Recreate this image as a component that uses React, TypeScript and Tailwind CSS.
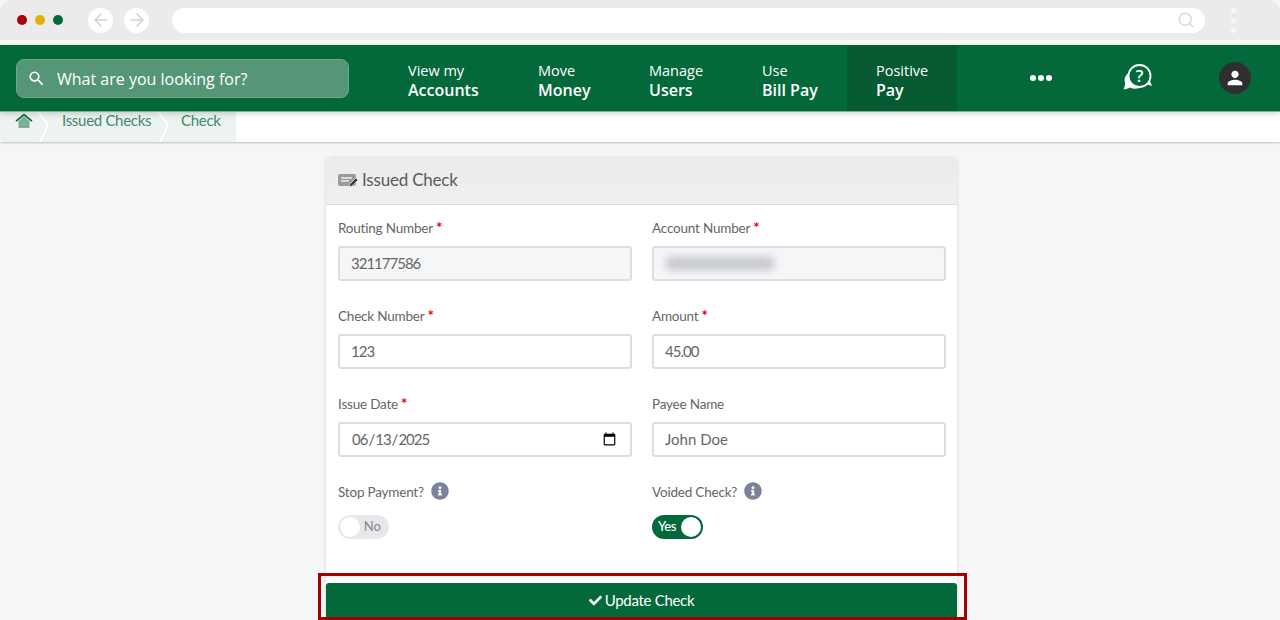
import { ArrowLeft, ArrowRight, Search } from "lucide-react";
import { FaCheck, FaInfoCircle } from "react-icons/fa";
import { MdPerson, MdSearch } from "react-icons/md";

const bodyFont = "font-['Lato','Open_Sans',sans-serif]";
const navFont = "font-['Open_Sans',sans-serif]";

export default function App() {
  return (
    <div className={`relative h-[620px] w-[1280px] overflow-hidden bg-[#f5f6f8] ${bodyFont}`}>
      <BrowserBar />
      <div className="h-[5px] bg-[#f9f9f9]" />
      <NavBar />
      <Breadcrumb />
      <main className="mt-4 ml-[326px] w-[631px]">
        <IssuedCheckCard />
      </main>
      {/* red highlight round the button */}
      <div className="absolute left-[318px] top-[573px] h-[47px] w-[649px] border-[3px] border-[#a50000]" />
    </div>
  );
}

function BrowserBar() {
  return (
    <div className="flex h-10 items-center rounded-t-xl bg-[#ebebeb]">
      <div className="ml-[17px] flex gap-2">
        <span className="h-[10px] w-[10px] rounded-full bg-[#a80007]" />
        <span className="h-[10px] w-[10px] rounded-full bg-[#e0b000]" />
        <span className="h-[10px] w-[10px] rounded-full bg-[#04693a]" />
      </div>
      <div className="ml-[25px] flex gap-[11px]">
        <span className="flex h-[25px] w-[25px] items-center justify-center rounded-full bg-white text-[#d4d4d4]">
          <ArrowLeft size={20} />
        </span>
        <span className="flex h-[25px] w-[25px] items-center justify-center rounded-full bg-white text-[#d4d4d4]">
          <ArrowRight size={20} />
        </span>
      </div>
      <div className="ml-[23px] flex h-[25px] w-[1033px] items-center justify-end rounded-full bg-white pr-[10px] text-[#d8d8d8]">
        <Search size={18} />
      </div>
      <div className="ml-[26px] flex flex-col gap-[5px]">
        <span className="h-[5px] w-[5px] rounded-full bg-[#f8f8f8]" />
        <span className="h-[5px] w-[5px] rounded-full bg-[#f8f8f8]" />
        <span className="h-[5px] w-[5px] rounded-full bg-[#f8f8f8]" />
      </div>
    </div>
  );
}

function NavBar() {
  return (
    <header className={`relative z-10 flex h-[67px] items-stretch border-b border-[#7fae97] bg-[#04693a] text-white shadow-[0_2px_6px_rgba(0,0,0,0.16)] ${navFont}`}>
      <div className="ml-4 mr-[59px] flex h-[39px] w-[333px] items-center self-center rounded-lg border border-[#6fa68c] bg-[#549675]">
        <MdSearch className="ml-[10px] text-[19px]" />
        <span className="ml-[11px] pt-[1px] text-[16px]">What are you looking for?</span>
      </div>
      <NavItem top="View my" bottom="Accounts" width="w-[130px]" />
      <NavItem top="Move" bottom="Money" width="w-[111px]" />
      <NavItem top="Manage" bottom="Users" width="w-[113px]" />
      <NavItem top="Use" bottom="Bill Pay" width="w-[85px]" />
      <div className="flex w-[110px] flex-col justify-center bg-[#055a31] pt-[4px] pl-[29px]">
        <div className="text-[14.500px] leading-[19px]">Positive</div>
        <div className="text-[16px] leading-[20px] font-semibold">Pay</div>
      </div>
      <div className="ml-[73px] flex items-center gap-[2px]">
        <span className="h-[6px] w-[6px] rounded-full bg-white" />
        <span className="h-[6px] w-[6px] rounded-full bg-white" />
        <span className="h-[6px] w-[6px] rounded-full bg-white" />
      </div>
      <div className="ml-[71px] flex items-center">
        <HelpIcon />
      </div>
      <div className="ml-[66px] flex items-center">
        <span className="flex h-8 w-8 items-center justify-center rounded-full bg-[#2f2f31]">
          <MdPerson className="text-[22px]" />
        </span>
      </div>
    </header>
  );
}

function NavItem({ top, bottom, width }: { top: string; bottom: string; width: string }) {
  return (
    <div className={`flex flex-col justify-center pt-[4px] ${width}`}>
      <div className="text-[14.500px] leading-[19px]">{top}</div>
      <div className="text-[16px] leading-[20px] font-semibold">{bottom}</div>
    </div>
  );
}

function HelpIcon() {
  return (
    <svg width="30" height="28" viewBox="0 0 30 28" fill="none">
      <path d="M5.500 9C2 11.500 1 15 2 18.500c.4 2-.4 4.500-1.500 7 2.500-.2 4.800-1 6.300-2 3.500 1.700 7.700 1.500 10.500 0 1-.5 1.800-1.200 2.400-2-5.500.8-10.500-1-13-5-1.500-2.500-1.700-5-1.200-7.500z" fill="#fff" />
      <circle cx="16.500" cy="12" r="11" fill="#04693a" stroke="#fff" strokeWidth="1.800" />
      <path d="M23 20l6 2-2.500-6z" fill="#fff" />
      <text x="16.500" y="18" textAnchor="middle" fontSize="17" fontWeight="600" fill="#fff" fontFamily="Open Sans, sans-serif">?</text>
    </svg>
  );
}

function Breadcrumb() {
  return (
    <div className="relative h-[30px] whitespace-nowrap bg-white shadow-[0_1px_2px_rgba(120,125,140,0.45)]">
      <div className="flex h-full w-[236px] rounded-bl-sm bg-[#edf3f0] text-[15px] tracking-[-0.3px] text-[#3f8a6c]">
        <div className="ml-[15px] mt-[1px] w-[23px]">
          <svg width="18" height="15" viewBox="0 0 18 15">
            <path d="M3.500 8L9 3.500 14.500 8v7H3.500z" fill="#7fae97" />
            <path d="M0.500 7.500L9 0.500l8.500 7-1 1.200L9 2.800 1.500 8.700z" fill="#04693a" />
          </svg>
        </div>
        <Chevron />
        <div className="ml-[11px] w-[96px] leading-[17px]">Issued Checks</div>
        <Chevron />
        <div className="ml-[10px] leading-[17px]">Check</div>
      </div>
    </div>
  );
}

function Chevron() {
  return (
    <svg width="13" height="30" viewBox="0 0 13 31" preserveAspectRatio="none" className="shrink-0">
      <path d="M1 0l9 14-8 17" fill="none" stroke="#fff" strokeWidth="2" />
    </svg>
  );
}

function IssuedCheckCard() {
  return (
    <section className="rounded-t-md bg-white shadow-[0_0_3px_rgba(120,125,140,0.35)]">
      <div className="flex h-[47px] items-center rounded-t-md border-b border-[#dcdcdc] bg-gradient-to-b from-[#ebebeb] to-[#f0f0f0] pb-[2px] pl-3 text-[17px] tracking-[-0.2px] text-[#5b5b5b]">
        <svg width="21" height="15" viewBox="0 0 21 15" className="mr-[3px]">
          <rect x="0" y="1" width="18" height="12" rx="2" fill="#9a9a9a" />
          <path d="M3 5h11M3 8h8" stroke="#eee" strokeWidth="1.500" />
          <path d="M11 14l1-3 6-6 2 2-6 6z" fill="#333" stroke="#eee" strokeWidth="0.700" />
        </svg>
        Issued Check
      </div>
      <div className="grid h-[368px] grid-cols-[294px_294px] content-start gap-x-5 pt-[13px] pl-3">
        <Field label="Routing Number" required value="321177586" disabled tight />
        <Field label="Account Number" required disabled blurred />
        <Field label="Check Number" required value="123" tight />
        <Field label="Amount" required value="45.00" tight />
        <Field label="Issue Date" required value="2025-06-13" type="date" tight />
        <Field label="Payee Name" value="John Doe" />
        <ToggleField label="Stop Payment?" on={false} />
        <ToggleField label="Voided Check?" on />
      </div>
      <div className="h-[10px] bg-gradient-to-b from-[#f0f1f5] to-white" />
      <button className="flex h-[36px] w-full items-center justify-center gap-[3px] rounded-[3px] bg-[#04693a] pb-[2px] text-[15px] tracking-[-0.3px] text-white">
        <FaCheck className="text-[13px]" />
        Update Check
      </button>
    </section>
  );
}

function Field({
  label,
  value,
  required,
  disabled,
  blurred,
  tight,
  type = "text",
}: {
  label: string;
  value?: string;
  required?: boolean;
  disabled?: boolean;
  blurred?: boolean;
  tight?: boolean;
  type?: string;
}) {
  return (
    <div className="h-[88px]">
      <div className="h-5 text-[13.500px] leading-[21px] tracking-[-0.2px] text-[#666]">
        {label}
        {required && <span className="ml-[3px] text-[15px] leading-none font-bold text-[#e8000b]">*</span>}
      </div>
      <div className="relative mt-2">
        <input
          type={type}
          defaultValue={value ?? ""}
          className={`h-[35px] w-full rounded-[3px] border-2 border-[#dcdee5] px-[11px] pb-[1px] text-[15px] text-[#666] outline-none ${
            tight ? "tracking-[-1px]" : ""
          } ${disabled ? "bg-[#f5f6f8]" : "bg-white"}`}
        />
        {blurred && (
          <div className="absolute left-[14px] top-[11px] h-[13px] w-[108px] rounded-sm bg-[#c4c6cc] blur-[4px]" />
        )}
      </div>
    </div>
  );
}

function ToggleField({ label, on }: { label: string; on: boolean }) {
  return (
    <div>
      <div className="flex h-5 items-center text-[13.500px] leading-5 tracking-[-0.2px] text-[#666]">
        {label}
        <FaInfoCircle className="ml-[7px] -mt-[2px] text-[18px] text-[#7c8299]" />
      </div>
      <div className="mt-[13px]">
        {on ? (
          <div className="flex h-6 w-[51px] items-center justify-between rounded-full bg-[#04693a] pl-[6px] pr-[2px] text-[13px] font-medium tracking-[-0.4px] text-white">
            Yes
            <span className="h-5 w-5 rounded-full bg-white" />
          </div>
        ) : (
          <div className="flex h-6 w-[51px] items-center justify-between rounded-full bg-[#e7e8ec] pl-[2px] pr-2 text-[13px] font-medium text-[#8c8c8c]">
            <span className="h-5 w-5 rounded-full bg-white" />
            No
          </div>
        )}
      </div>
    </div>
  );
}
